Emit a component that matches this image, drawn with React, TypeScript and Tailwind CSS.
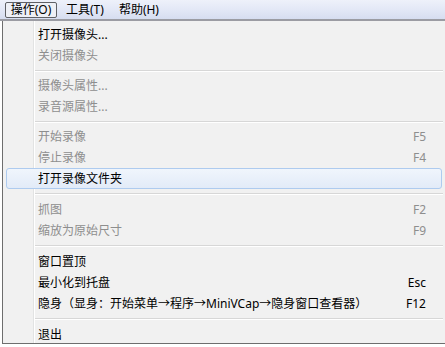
const FONT = { fontFamily: '"Noto Sans", "Noto Sans CJK SC", sans-serif' };

type Item =
  | { kind: 'item'; label: string; shortcut?: string; disabled?: boolean; active?: boolean }
  | { kind: 'sep'; h: string };

const items: Item[] = [
  { kind: 'item', label: '打开摄像头...' },
  { kind: 'item', label: '关闭摄像头', disabled: true },
  { kind: 'sep', h: 'h-[9px]' },
  { kind: 'item', label: '摄像头属性...', disabled: true },
  { kind: 'item', label: '录音源属性...', disabled: true },
  { kind: 'sep', h: 'h-[9px]' },
  { kind: 'item', label: '开始录像', shortcut: 'F5', disabled: true },
  { kind: 'item', label: '停止录像', shortcut: 'F4', disabled: true },
  { kind: 'item', label: '打开录像文件夹', active: true },
  { kind: 'sep', h: 'h-[10px]' },
  { kind: 'item', label: '抓图', shortcut: 'F2', disabled: true },
  { kind: 'item', label: '缩放为原始尺寸', shortcut: 'F9', disabled: true },
  { kind: 'sep', h: 'h-[10px]' },
  { kind: 'item', label: '窗口置顶' },
  { kind: 'item', label: '最小化到托盘', shortcut: 'Esc' },
  { kind: 'item', label: '隐身（显身：开始菜单→程序→MiniVCap→隐身窗口查看器）', shortcut: 'F12' },
  { kind: 'sep', h: 'h-[10px]' },
  { kind: 'item', label: '退出' },
];

export default function App() {
  return (
    <div className="w-[445px] h-[347px] bg-white overflow-hidden text-[12px] text-black" style={FONT}>
      {/* Menu bar */}
      <div className="h-[21px] flex items-start border-b-2 border-[#9b9ca3] bg-gradient-to-b from-[#eef1fa] via-[#e3e8f6] to-[#d6ddf0]">
        <div className="mt-[2px] ml-[5px] h-[16px] w-[52px] flex items-center justify-center border border-[#5f6166] rounded-[2px] bg-[#eef0f6] leading-none">
          操作(O)
        </div>
        <div className="mt-[2px] ml-[9px] h-[16px] flex items-center leading-none">工具(T)</div>
        <div className="mt-[2px] ml-[15px] h-[16px] flex items-center leading-none">帮助(H)</div>
      </div>

      {/* Dropdown */}
      <div className="pl-[2px]">
        <div className="relative h-[323px] overflow-hidden bg-[#f1f1f1] border-l border-b border-[#6e6e6e] pt-[3px]">
          <div className="absolute top-0 bottom-0 left-[30px] flex">
            <div className="w-px h-full bg-[#e2e3e3]" />
            <div className="w-px h-full bg-white" />
          </div>
          {items.map((it, i) =>
            it.kind === 'sep' ? (
              <div key={i} className={`${it.h} flex flex-col justify-center pl-[32px] pr-[2px]`}>
                <div className="h-px bg-[#d7d7d7]" />
                <div className="h-px bg-white" />
              </div>
            ) : (
              <div
                key={i}
                className={`relative mx-[3px] h-[21px] flex items-center pl-[31px] pr-[15px] leading-none rounded-[3px] border ${
                  it.active
                    ? 'border-[#aecbef] bg-gradient-to-b from-[#f0f5fc] to-[#e2ebf8]'
                    : 'border-transparent'
                } ${it.disabled ? 'text-[#8e8e8e]' : 'text-black'}`}
              >
                <span className="flex-1 whitespace-nowrap">{it.label}</span>
                {it.shortcut && <span>{it.shortcut}</span>}
              </div>
            )
          )}
        </div>
      </div>
    </div>
  );
}
